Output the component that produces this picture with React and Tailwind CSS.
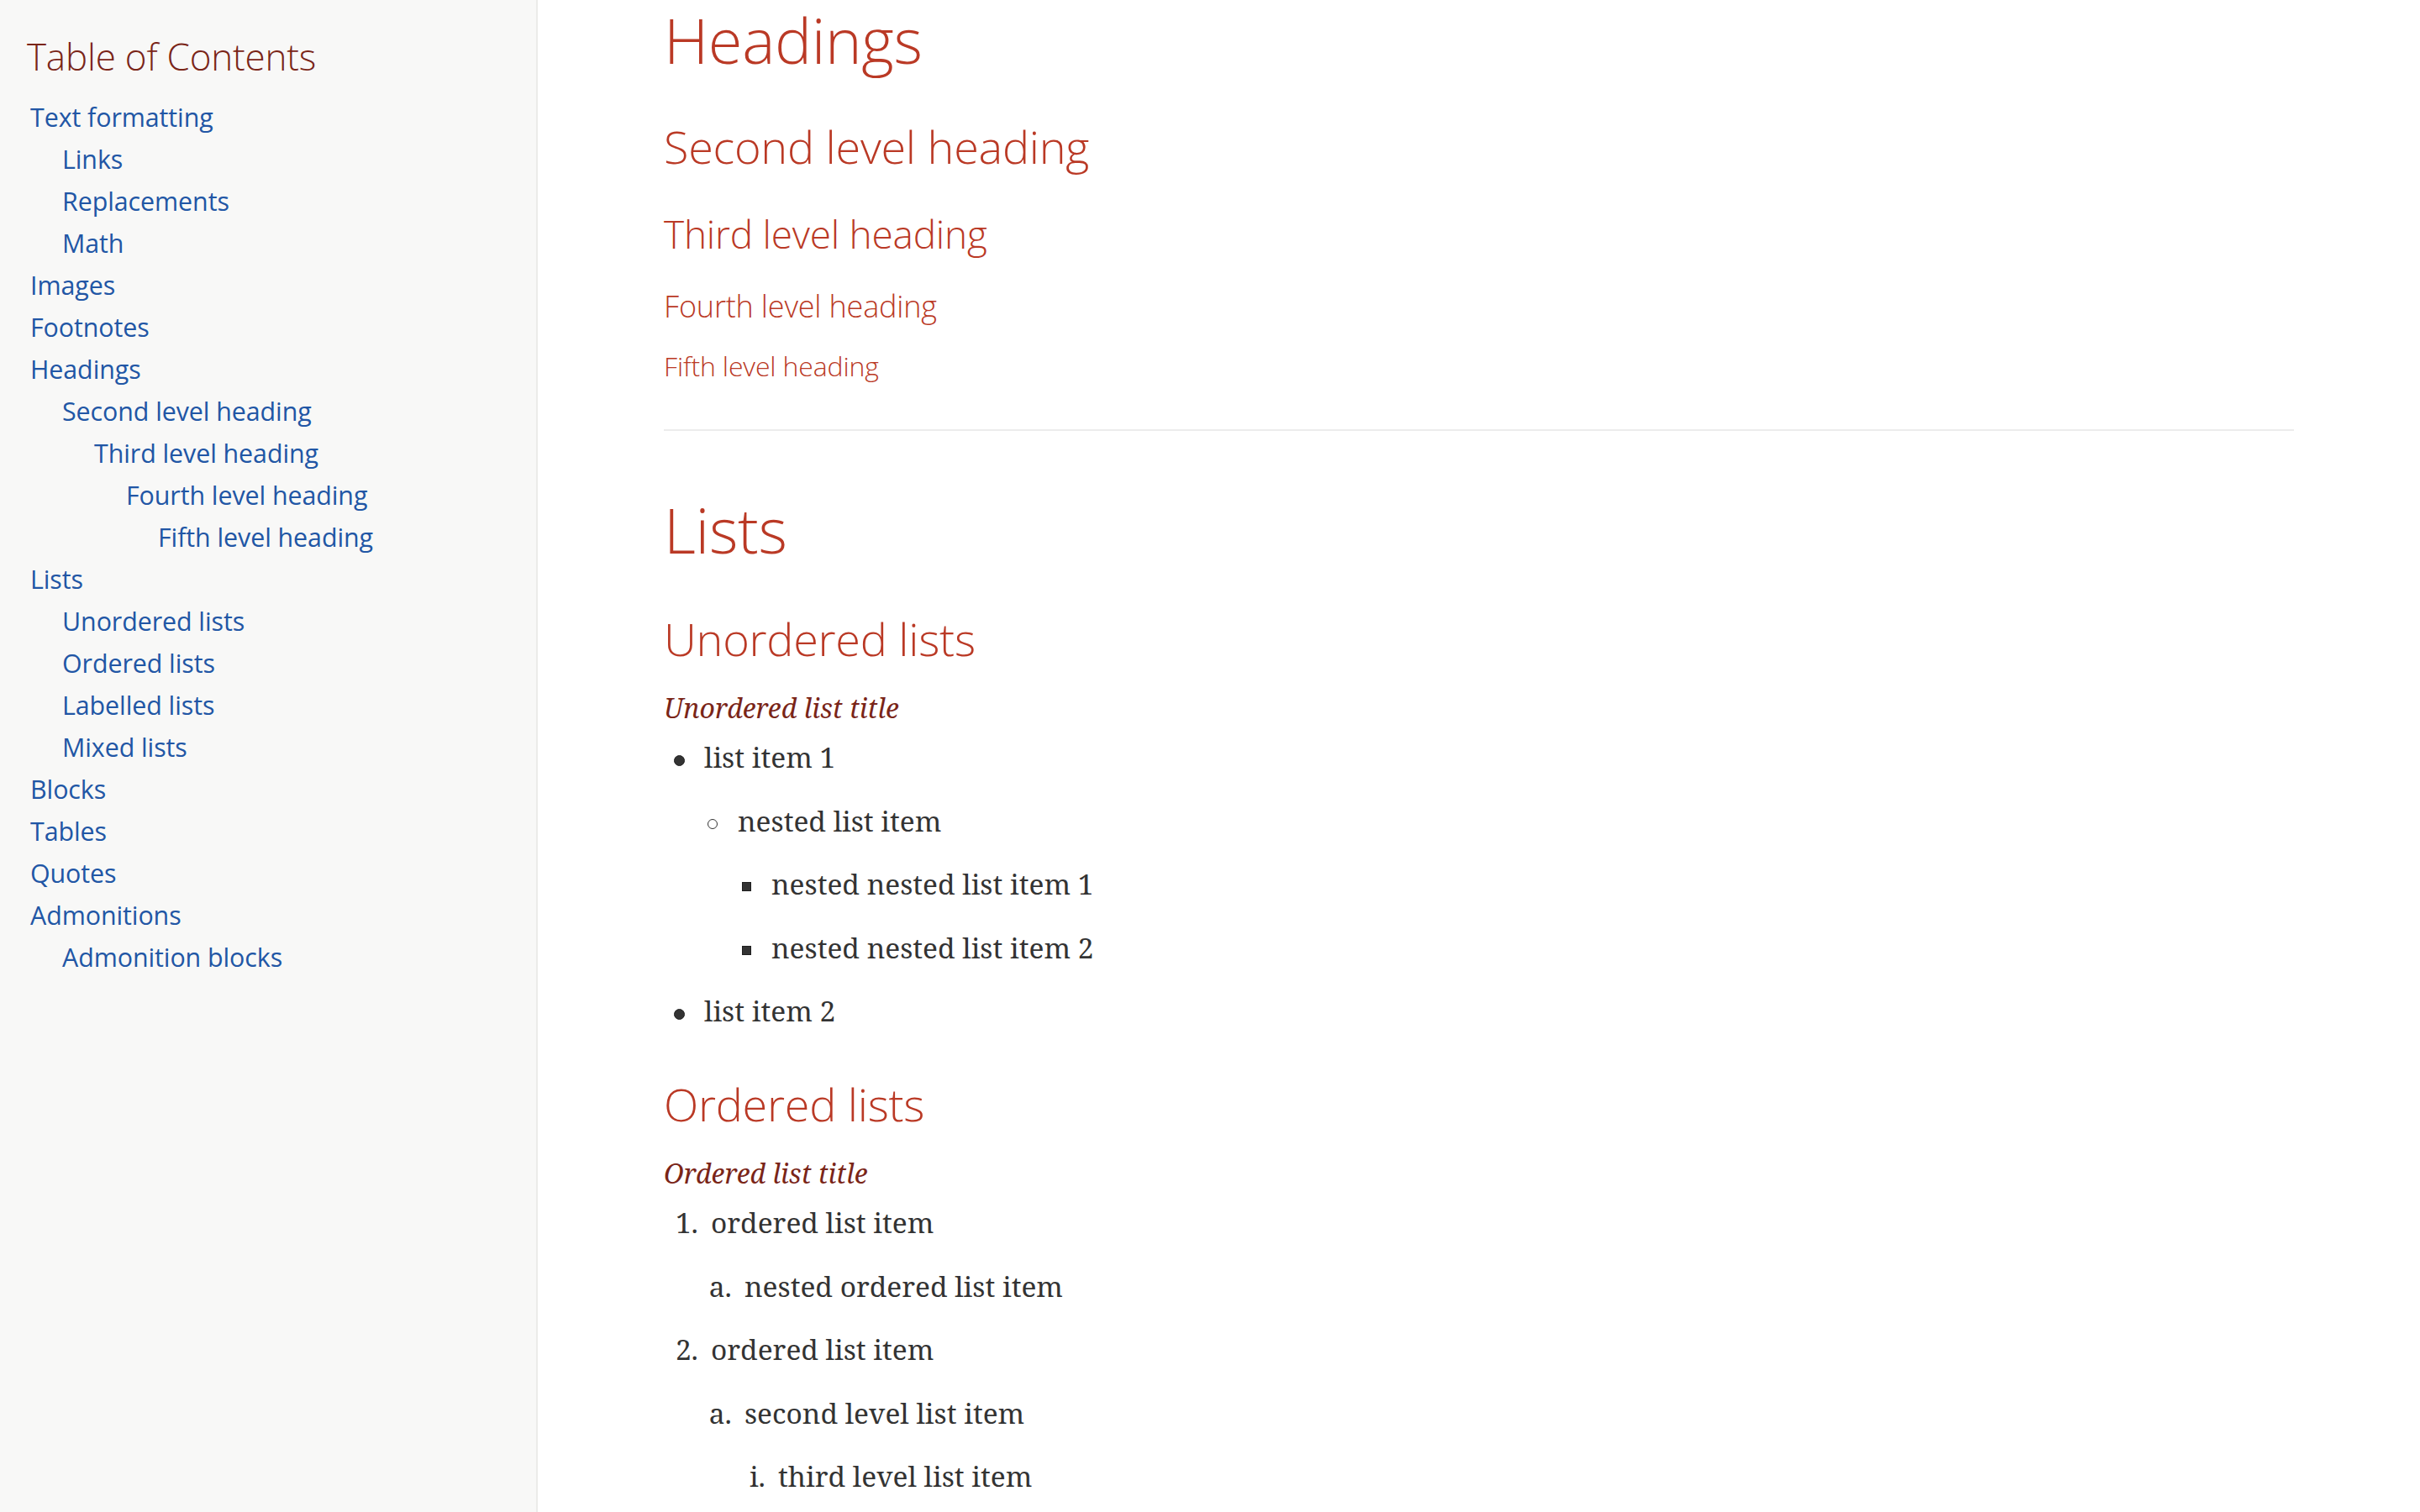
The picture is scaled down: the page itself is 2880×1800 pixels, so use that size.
import React from "react";

const toc = [
  ["Text formatting", 0],
  ["Links", 1],
  ["Replacements", 1],
  ["Math", 1],
  ["Images", 0],
  ["Footnotes", 0],
  ["Headings", 0],
  ["Second level heading", 1],
  ["Third level heading", 2],
  ["Fourth level heading", 3],
  ["Fifth level heading", 4],
  ["Lists", 0],
  ["Unordered lists", 1],
  ["Ordered lists", 1],
  ["Labelled lists", 1],
  ["Mixed lists", 1],
  ["Blocks", 0],
  ["Tables", 0],
  ["Quotes", 0],
  ["Admonitions", 0],
  ["Admonition blocks", 1],
];

const indent = ["pl-0", "pl-[38px]", "pl-[76px]", "pl-[114px]", "pl-[152px]"];

const sans = "font-['Open_Sans','DejaVu_Sans',sans-serif]";
const serif = "font-['Noto_Serif','DejaVu_Serif',serif]";
const head = `${sans} font-light text-[#ba3925] tracking-[-0.005em]`;

function Disc() {
  return <span className="shrink-0 w-[13px] h-[13px] rounded-full bg-[#333333] border border-[#222222] -ml-[36px] mr-[23px] mt-[24.6px]" />;
}
function Circle() {
  return <span className="shrink-0 w-[12px] h-[12px] rounded-full border-[1.5px] border-[#333333] -ml-[36px] mr-[24px] mt-[25.1px]" />;
}
function Square() {
  return <span className="shrink-0 w-[11px] h-[11px] bg-[#333333] border border-[#1f1f1f] -ml-[35px] mr-[24px] mt-[25.1px]" />;
}
function Num({ children }) {
  return <span className="shrink-0 w-[44px] -ml-[44px] pr-[15px] text-right">{children}</span>;
}

function Item({ children, first, marker, sub }) {
  return (
    <li className={`${first ? "" : "mt-[21.1px]"} text-[33.5px] text-[#333333]`}>
      <div className="flex items-start leading-[54.4px]">
        {marker}
        <span>{children}</span>
      </div>
      {sub}
    </li>
  );
}

function SubList({ children }) {
  return <ul className="mt-[21.1px] ml-[40px]">{children}</ul>;
}
function SubOl({ children }) {
  return <ol className="mt-[21.1px] ml-[40px]">{children}</ol>;
}

export default function App() {
  return (
    <div className="flex h-[1800px] w-full overflow-hidden bg-white">
      <aside className="w-[640px] shrink-0 bg-[#f8f8f7] border-r-2 border-[#ebebe9] px-[32px] pt-[45px]">
        <div className={`${sans} text-[44px] leading-[44px] font-light text-[#7a2518] tracking-[-0.005em] mb-[31.3px]`}>
          Table of Contents
        </div>
        <ul className={`${sans} ml-[4px] tracking-[-0.005em]`}>
          {toc.map(([t, l]) => (
            <li key={t} className={`${indent[l]} mt-[10px] text-[30.4px] leading-[40px]`}>
              <a className="text-[#2156a5]">{t}</a>
            </li>
          ))}
        </ul>
      </aside>

      <main className="flex-1 min-w-0">
        <div className={`max-w-[2000px] mx-auto px-[30px] pt-[3.5px] ${serif}`}>
          <h2 className={`${head} text-[74px] leading-[88.8px]`}>Headings</h2>
          <h3 className={`${head} text-[54px] leading-[64.8px] mt-[49.35px]`}>Second level heading</h3>
          <h4 className={`${head} text-[46px] leading-[55.2px] mt-[44.8px]`}>Third level heading</h4>
          <h5 className={`${head} text-[36px] leading-[43.2px] mt-[36.5px]`}>Fourth level heading</h5>
          <h6 className={`${head} text-[32px] leading-[38.4px] mt-[31px]`}>Fifth level heading</h6>

          <div className="mt-[55.3px] h-[2px] bg-[#ececec]" />

          <h2 className={`${head} text-[74px] leading-[88.8px] mt-[73.9px]`}>Lists</h2>
          <h3 className={`${head} text-[54px] leading-[64.8px] mt-[52.65px]`}>Unordered lists</h3>

          <div className="mt-[26.8px] text-[32px] leading-[46.4px] italic text-[#7a2518]">Unordered list title</div>
          <ul className="mt-[8px] ml-[48px]">
            <Item
              first
              marker={<Disc />}
              sub={
                <SubList>
                  <Item
                    first
                    marker={<Circle />}
                    sub={
                      <SubList>
                        <Item first marker={<Square />}>nested nested list item 1</Item>
                        <Item marker={<Square />}>nested nested list item 2</Item>
                      </SubList>
                    }
                  >
                    nested list item
                  </Item>
                </SubList>
              }
            >
              list item 1
            </Item>
            <Item marker={<Disc />}>list item 2</Item>
          </ul>

          <h3 className={`${head} text-[54px] leading-[64.8px] mt-[51.5px]`}>Ordered lists</h3>
          <div className="mt-[27.5px] text-[32px] leading-[46.4px] italic text-[#7a2518]">Ordered list title</div>
          <ol className="mt-[7.5px] ml-[56px]">
            <Item
              first
              marker={<Num>1.</Num>}
              sub={
                <SubOl>
                  <Item first marker={<Num>a.</Num>}>nested ordered list item</Item>
                </SubOl>
              }
            >
              ordered list item
            </Item>
            <Item
              marker={<Num>2.</Num>}
              sub={
                <SubOl>
                  <Item
                    first
                    marker={<Num>a.</Num>}
                    sub={
                      <SubOl>
                        <Item first marker={<Num>i.</Num>}>third level list item</Item>
                      </SubOl>
                    }
                  >
                    second level list item
                  </Item>
                </SubOl>
              }
            >
              ordered list item
            </Item>
          </ol>
        </div>
      </main>
    </div>
  );
}
